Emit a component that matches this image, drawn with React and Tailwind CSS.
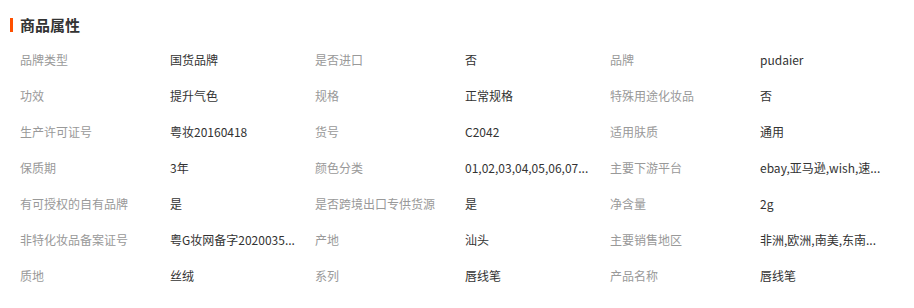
import React from 'react';

const rows = [
  [['品牌类型', '国货品牌'], ['是否进口', '否'], ['品牌', 'pudaier']],
  [['功效', '提升气色'], ['规格', '正常规格'], ['特殊用途化妆品', '否']],
  [['生产许可证号', '粤妆20160418'], ['货号', 'C2042'], ['适用肤质', '通用']],
  [['保质期', '3年'], ['颜色分类', '01,02,03,04,05,06,07...'], ['主要下游平台', 'ebay,亚马逊,wish,速...']],
  [['有可授权的自有品牌', '是'], ['是否跨境出口专供货源', '是'], ['净含量', '2g']],
  [['非特化妆品备案证号', '粤G妆网备字2020035...'], ['产地', '汕头'], ['主要销售地区', '非洲,欧洲,南美,东南...']],
  [['质地', '丝绒'], ['系列', '唇线笔'], ['产品名称', '唇线笔']],
];

const App = () => {
  return (
    <div
      className="w-[914px] h-[308px] bg-white"
      style={{ fontFamily: '"Noto Sans CJK SC", "Noto Sans", sans-serif' }}
    >
      {/* Title */}
      <div className="flex items-center pl-[10px] pt-[15px] h-[35px]">
        <span className="w-[3px] h-[14px] bg-[#ff5000] mr-[7px]"></span>
        <span className="text-[15px] leading-[20px] font-bold text-[#333]">商品属性</span>
      </div>

      {/* Attributes */}
      <div className="pl-[20px] mt-[7px]">
        {rows.map((row, i) => (
          <div key={i} className="flex h-[36px] items-center">
            {row.map(([label, value], j) => (
              <div key={j} className="flex w-[295px] text-[12px] leading-[18px]">
                <span className="w-[150px] shrink-0 text-[#999] whitespace-nowrap">{label}</span>
                <span className="w-[140px] text-[#333] whitespace-nowrap">{value}</span>
              </div>
            ))}
          </div>
        ))}
      </div>
    </div>
  );
};

export default App;
